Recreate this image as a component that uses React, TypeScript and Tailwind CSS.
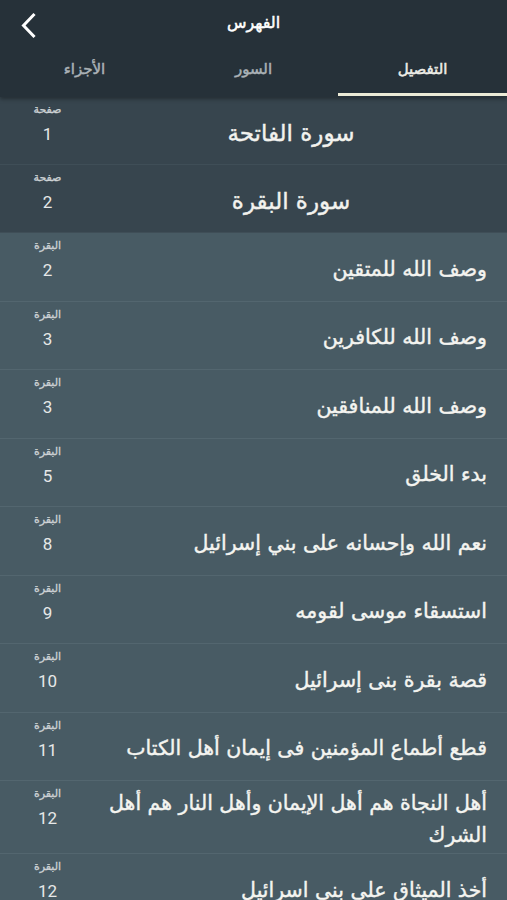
import React from "react";

const AR = { fontFamily: '"DejaVu Sans", "Noto Sans", sans-serif' };
const NUM = { fontFamily: 'Roboto, "Liberation Sans", sans-serif' };

type Row = { label: string; num: string; title: string };

const suras: Row[] = [
  { label: "صفحة", num: "1", title: "سورة الفاتحة" },
  { label: "صفحة", num: "2", title: "سورة البقرة" },
];

const details: Row[] = [
  { label: "البقرة", num: "2", title: "وصف الله للمتقين" },
  { label: "البقرة", num: "3", title: "وصف الله للكافرين" },
  { label: "البقرة", num: "3", title: "وصف الله للمنافقين" },
  { label: "البقرة", num: "5", title: "بدء الخلق" },
  { label: "البقرة", num: "8", title: "نعم الله وإحسانه على بني إسرائيل" },
  { label: "البقرة", num: "9", title: "استسقاء موسى لقومه" },
  { label: "البقرة", num: "10", title: "قصة بقرة بنى إسرائيل" },
  { label: "البقرة", num: "11", title: "قطع أطماع المؤمنين فى إيمان أهل الكتاب" },
  { label: "البقرة", num: "12", title: "أهل النجاة هم أهل الإيمان وأهل النار هم أهل الشرك" },
  { label: "البقرة", num: "12", title: "أخذ الميثاق على بنى اسرائيل" },
];

function LeftCol({ label, num }: { label: string; num: string }) {
  return (
    <div className="w-[95px] shrink-0 flex flex-col items-center pt-[6px]">
      <div className="text-[11px] leading-[14px] text-[#cdd2d5] [-webkit-text-stroke:0.3px_#cdd2d5]" style={AR}>
        {label}
      </div>
      <div className="mt-[7px] text-[17px] leading-[20px] text-[#e6e8e8]" style={NUM}>
        {num}
      </div>
    </div>
  );
}

export default function App() {
  return (
    <div className="w-[507px] h-[900px] overflow-hidden bg-[#485b64] flex flex-col">
      <div className="bg-[#263139] shrink-0 relative z-10 shadow-[0_2px_4px_rgba(0,0,0,0.35)]">
        <div className="h-[45px] flex items-center justify-center relative">
          <svg
            className="absolute left-[19px] top-[12px]"
            width="20"
            height="28"
            viewBox="0 0 20 28"
            fill="none"
          >
            <path d="M14.5 3 L4.5 13.5 L14.5 24" stroke="#ffffff" strokeWidth="3" strokeLinecap="square" />
          </svg>
          <div className="text-[16px] text-white [-webkit-text-stroke:0.5px_#ffffff]" style={AR} dir="rtl">
            الفهرس
          </div>
        </div>
        <div className="h-[52px] flex flex-row-reverse">
          <div className="flex-1 flex flex-col">
            <div className="flex-1 flex items-center justify-center text-[15px] text-[#eeeee8] [-webkit-text-stroke:0.5px_#eeeee8]" style={AR} dir="rtl">
              التفصيل
            </div>
            <div className="h-[3px] bg-[#ecebd7] mb-[1px]" />
          </div>
          <div className="flex-1 flex items-center justify-center pb-[4px] text-[15px] text-[#aab1b6] [-webkit-text-stroke:0.5px_#aab1b6]" style={AR} dir="rtl">
            السور
          </div>
          <div className="flex-1 flex items-center justify-center pb-[4px] text-[15px] text-[#aab1b6] [-webkit-text-stroke:0.5px_#aab1b6]" style={AR} dir="rtl">
            الأجزاء
          </div>
        </div>
      </div>
      <div className="flex flex-col">
        {suras.map((r, i) => (
          <div key={"s" + i} className="h-[68px] flex bg-[#37454e] border-b border-[#3f4e57]">
            <LeftCol label={r.label} num={r.num} />
            <div className="flex-1 flex items-center justify-center pr-[20px] pt-[5px]">
              <div className="text-[23px] text-[#f2f2ee] [-webkit-text-stroke:0.4px_#f2f2ee]" style={AR} dir="rtl">
                {r.title}
              </div>
            </div>
          </div>
        ))}
        {details.map((r, i) => (
          <div key={"d" + i} className="min-h-[68.5px] flex bg-[#485b64] border-b border-[#53666f]">
            <LeftCol label={r.label} num={r.num} />
            <div className="flex-1 flex items-center justify-end pr-[20px] pl-[10px] pt-[6px] pb-[2px]">
              <div className="text-[20.5px] leading-[32px] text-[#f4f4f0] text-right [-webkit-text-stroke:0.4px_#f4f4f0]" style={AR} dir="rtl">
                {r.title}
              </div>
            </div>
          </div>
        ))}
      </div>
    </div>
  );
}
